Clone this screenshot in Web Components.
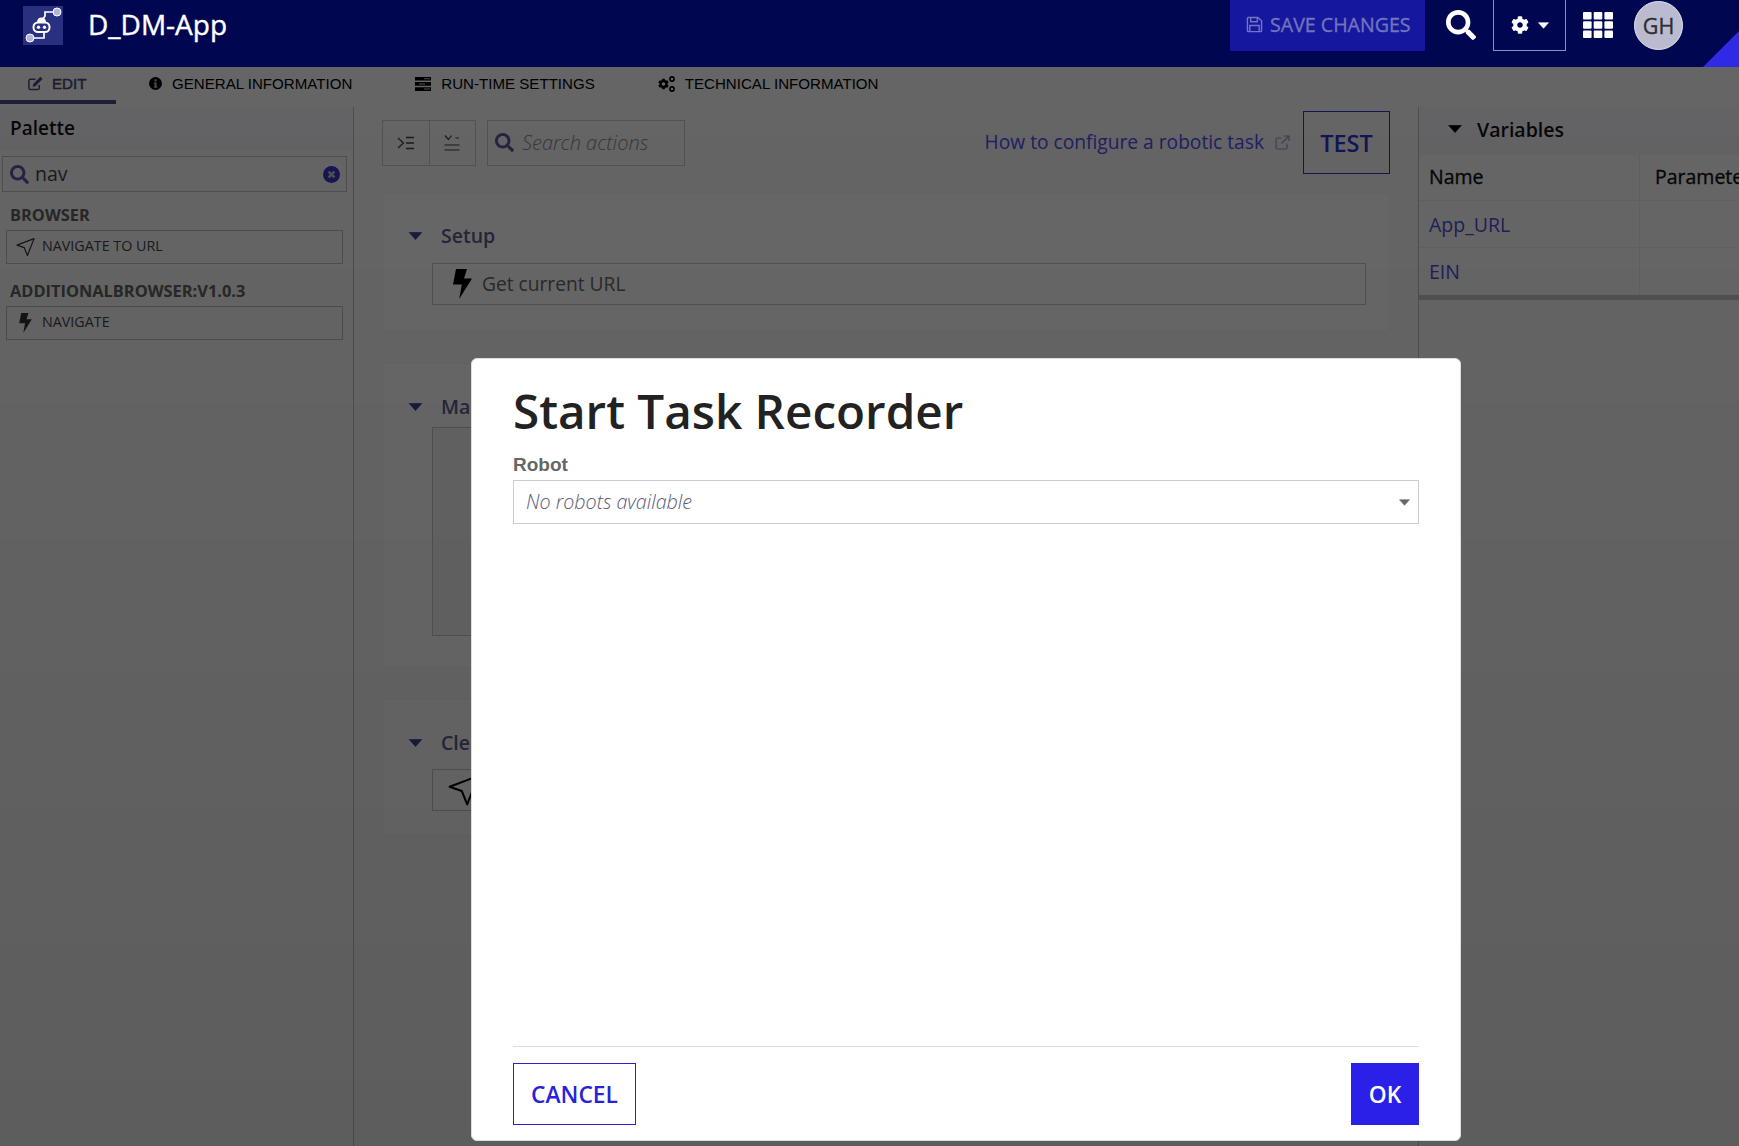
<!DOCTYPE html>
<html>
<head>
<meta charset="utf-8">
<title>D_DM-App</title>
<style>
  html, body { margin: 0; height: 100%; overflow: hidden; }
  body { background: #f5f5f6; font-family: "Open Sans", "Liberation Sans", sans-serif; }
  .page { display: block; width: 1739px; height: 1146px; overflow: hidden; }
  .workspace { display: grid; grid-template-columns: 354px 1065px 320px; height: 1042px; margin-top: 3px; }
</style>
</head>
<body>
<div class="page">
  <app-header title-text="D_DM-App"></app-header>
  <tab-bar></tab-bar>
  <div class="workspace">
    <palette-panel></palette-panel>
    <action-editor>
      <action-section label="Setup" top="33" gap="18" inner="42" bottom="26" kind="bolt" text="Get current URL"></action-section>
      <action-section label="Main" top="34" gap="11" inner="209" bottom="31"></action-section>
      <action-section label="Cleanup" top="34" gap="17" inner="42" bottom="24" kind="nav" text="Close browser"></action-section>
    </action-editor>
    <variables-panel></variables-panel>
  </div>
</div>
<task-modal heading="Start Task Recorder"></task-modal>

<script>
const ICONS = {
  search: '<svg viewBox="0 0 512 512"><path fill="currentColor" d="M505 442.7L405.3 343c-4.5-4.5-10.6-7-17-7H372c27.6-35.3 44-79.7 44-128C416 93.1 322.9 0 208 0S0 93.1 0 208s93.1 208 208 208c48.3 0 92.7-16.4 128-44v16.3c0 6.4 2.5 12.5 7 17l99.7 99.7c9.4 9.4 24.6 9.4 33.9 0l28.3-28.3c9.4-9.4 9.4-24.6.1-34zM208 336c-70.7 0-128-57.2-128-128 0-70.7 57.2-128 128-128 70.7 0 128 57.2 128 128 0 70.7-57.2 128-128 128z"/></svg>',
  cog: '<svg viewBox="0 0 512 512"><path fill="currentColor" d="M487.4 315.7l-42.6-24.6c4.3-23.2 4.3-47 0-70.2l42.6-24.6c4.9-2.8 7.1-8.6 5.5-14-11.1-35.6-30-67.8-54.7-94.6-3.8-4.1-10-5.1-14.8-2.3L380.8 110c-17.9-15.4-38.5-27.3-60.8-35.1V25.8c0-5.6-3.9-10.5-9.4-11.7-36.7-8.2-74.3-7.8-109.2 0-5.5 1.2-9.4 6.1-9.4 11.7V75c-22.2 7.9-42.8 19.8-60.8 35.1L88.7 85.5c-4.9-2.8-11-1.9-14.8 2.3-24.7 26.7-43.6 58.9-54.7 94.6-1.7 5.4.6 11.2 5.5 14L67.3 221c-4.3 23.2-4.3 47 0 70.2l-42.6 24.6c-4.9 2.8-7.1 8.6-5.5 14 11.1 35.6 30 67.8 54.7 94.6 3.8 4.1 10 5.1 14.8 2.3l42.6-24.6c17.9 15.4 38.5 27.3 60.8 35.1v49.2c0 5.6 3.9 10.5 9.4 11.7 36.7 8.2 74.3 7.8 109.2 0 5.5-1.2 9.4-6.1 9.4-11.7v-49.2c22.2-7.9 42.8-19.8 60.8-35.1l42.6 24.6c4.9 2.8 11 1.9 14.8-2.3 24.7-26.7 43.6-58.9 54.7-94.6 1.5-5.5-.7-11.3-5.6-14.1zM256 336c-44.1 0-80-35.9-80-80s35.9-80 80-80 80 35.9 80 80-35.9 80-80 80z"/></svg>',
  save: '<svg viewBox="0 0 18 18" fill="none" stroke="currentColor" stroke-width="1.5"><path d="M1.5 2.5a1 1 0 0 1 1-1h10.2l3.8 3.8v10.2a1 1 0 0 1-1 1h-13a1 1 0 0 1-1-1z"/><path d="M5 1.5v4.5h7V1.5M4 16.5V10h10v6.5"/></svg>',
  grid: '<svg viewBox="0 0 30 26" fill="currentColor"><rect x="0" y="0" width="8.6" height="7.4" rx="1"/><rect x="10.7" y="0" width="8.6" height="7.4" rx="1"/><rect x="21.4" y="0" width="8.6" height="7.4" rx="1"/><rect x="0" y="9.3" width="8.6" height="7.4" rx="1"/><rect x="10.7" y="9.3" width="8.6" height="7.4" rx="1"/><rect x="21.4" y="9.3" width="8.6" height="7.4" rx="1"/><rect x="0" y="18.6" width="8.6" height="7.4" rx="1"/><rect x="10.7" y="18.6" width="8.6" height="7.4" rx="1"/><rect x="21.4" y="18.6" width="8.6" height="7.4" rx="1"/></svg>',
  caret: '<svg viewBox="0 0 12 7"><path fill="currentColor" stroke="currentColor" stroke-width=".6" stroke-linejoin="round" d="M.5.4h11L6 6.600z"/></svg>',
  edit: '<svg viewBox="0 0 16 15"><path fill="none" stroke="currentColor" stroke-width="1.6" d="M12 9v3.2a1.6 1.6 0 0 1-1.6 1.6H2.6A1.6 1.6 0 0 1 1 12.2V4.6A1.6 1.6 0 0 1 2.6 3H8"/><path fill="currentColor" d="M13.2.4l2.3 2.3-7.6 7.6-3 .7.7-3z"/></svg>',
  info: '<svg viewBox="0 0 14 14"><circle cx="7" cy="7" r="7" fill="currentColor"/><rect x="5.9" y="2.6" width="2.3" height="2.2" fill="#b8b8b8"/><path fill="#b8b8b8" d="M5.2 5.9h3v4.3h.8v1.4H5.2v-1.4h.8V7.3h-.8z"/></svg>',
  server: '<svg viewBox="0 0 16 14" fill="currentColor"><path d="M0 0h16v3.6H0zM0 5.1h16v3.7H0zM0 10.3h16V14H0z"/><path fill="#b8b8b8" d="M9 1.2h6v1.1H9zM4 6.4h6v1.1H4zM9 11.5h6v1.1H9z"/></svg>',
  cogs: '<svg viewBox="0 0 17 16" fill="currentColor"><g transform="translate(0 2.5) scale(.0215)"><path d="M487.4 315.7l-42.6-24.6c4.3-23.2 4.3-47 0-70.2l42.6-24.6c4.9-2.8 7.1-8.6 5.5-14-11.1-35.6-30-67.8-54.7-94.6-3.8-4.1-10-5.1-14.8-2.3L380.8 110c-17.9-15.4-38.5-27.3-60.8-35.1V25.8c0-5.6-3.9-10.5-9.4-11.7-36.7-8.2-74.3-7.8-109.2 0-5.5 1.2-9.4 6.1-9.4 11.7V75c-22.2 7.9-42.8 19.8-60.8 35.1L88.7 85.5c-4.9-2.8-11-1.9-14.8 2.3-24.7 26.7-43.6 58.9-54.7 94.6-1.7 5.4.6 11.2 5.5 14L67.3 221c-4.3 23.2-4.3 47 0 70.2l-42.6 24.6c-4.9 2.8-7.1 8.6-5.5 14 11.1 35.6 30 67.8 54.7 94.6 3.8 4.1 10 5.1 14.8 2.3l42.6-24.6c17.9 15.4 38.5 27.3 60.8 35.1v49.2c0 5.6 3.9 10.5 9.4 11.7 36.7 8.2 74.3 7.8 109.2 0 5.5-1.2 9.4-6.1 9.4-11.7v-49.2c22.2-7.9 42.8-19.8 60.8-35.1l42.6 24.6c4.9 2.8 11 1.9 14.8-2.3 24.7-26.7 43.6-58.9 54.7-94.6 1.5-5.5-.7-11.3-5.6-14.1zM256 336c-44.1 0-80-35.9-80-80s35.9-80 80-80 80 35.9 80 80-35.9 80-80 80z"/></g><circle cx="14" cy="3" r="2.1" fill="none" stroke="currentColor" stroke-width="1.6"/><circle cx="14" cy="13" r="2.1" fill="none" stroke="currentColor" stroke-width="1.6"/></svg>',
  clear: '<svg viewBox="0 0 17 17"><circle cx="8.5" cy="8.5" r="8.5" fill="currentColor"/><path d="M5.6 5.6l5.8 5.8M11.4 5.6l-5.8 5.8" stroke="#c4c4c6" stroke-width="2.4"/></svg>',
  nav: '<svg viewBox="0 0 20 20"><path fill="none" stroke="currentColor" stroke-width="1.25" stroke-linejoin="round" d="M19 1.200L1 8l7.600 2.600L12 19z"/></svg>',
  bolt: '<svg viewBox="0 0 19 30"><path fill="currentColor" d="M3 0h11l-3 9.5h8L6.2 30l2.6-14.5H0z"/></svg>',
  outdent: '<svg viewBox="0 0 18 16" fill="none" stroke="currentColor" stroke-width="1.3"><path d="M1 3l5.4 5L1 13M9 2.5h8M9 8h8M9 13.5h8"/></svg>',
  check: '<svg viewBox="0 0 16 18" fill="none" stroke="currentColor" stroke-width="1.2"><path d="M1 1.500l3.400 4 3.200-4M11.500 4h3.500M.5 11h15M.5 16h15"/></svg>',
  external: '<svg viewBox="0 0 15 15" fill="none" stroke="currentColor" stroke-width="1.2"><path d="M12 8.5v4a1.5 1.5 0 0 1-1.500 1.500h-8A1.500 1.500 0 0 1 1 12.500v-8A1.500 1.500 0 0 1 2.500 3h4M9 1h5v5M14 1L6.500 8.500"/></svg>'
};

// small svg wrapper, size comes from the w and h attributes
class UiIcon extends HTMLElement {
  connectedCallback() {
    const w = this.getAttribute('w') || 16;
    const h = this.getAttribute('h') || w;
    this.attachShadow({ mode: 'open' }).innerHTML = `
      <style>
        :host { display: inline-block; width: ${w}px; height: ${h}px; flex: none; line-height: 0; }
        svg { display: block; width: 100%; height: 100%; }
      </style>${ICONS[this.getAttribute('name')] || ''}`;
  }
}

class AppHeader extends HTMLElement {
  connectedCallback() {
    this.attachShadow({ mode: 'open' }).innerHTML = `
      <style>
        :host { display: flex; position: relative; height: 67px; align-items: flex-start; background: #000650; color: #fff; overflow: hidden; }
        .logo { margin: 6px 0 0 23px; width: 40px; height: 39px; background: #2a3080; flex: none; }
        .logo svg { display: block; width: 40px; height: 39px; }
        .name { margin: 4px 0 0 25px; font-size: 28px; font-weight: 500; line-height: 40px; -webkit-text-stroke: .4px #fff; }
        .spacer { flex: 1; }
        .save { display: flex; align-items: center; gap: 7px; width: 195px; height: 49px; padding-bottom: 2px; background: #15189f; color: #7274bc; font-size: 19.600px; -webkit-text-stroke: .35px #7274bc; }
        .save ui-icon { margin-left: 16px; }
        .search { margin: 10px 0 0 21px; }
        .gear { display: flex; align-items: center; box-sizing: border-box; width: 73px; height: 51px; margin-left: 17px; padding-left: 17px; border: 1px solid #8c8ec4; border-top: 0; }
        .gear ui-icon:last-child { margin-left: 9px; }
        .grid { margin: 12px 0 0 17px; }
        .avatar { display: flex; align-items: center; justify-content: center; box-sizing: border-box; width: 49px; height: 49px; margin: 1px 56px 0 21px; border-radius: 50%; border: 1px solid #e4e4ee; background: #bbbbd0; color: #2e2e2e; font-size: 21.500px; -webkit-text-stroke: .35px #2e2e2e; }
        .corner { position: absolute; right: 0; bottom: 0; width: 36px; height: 36px; background: #2f2be4; clip-path: polygon(100% 0, 100% 100%, 0 100%); }
      </style>
      <div class="logo">
        <svg viewBox="0 0 40 39">
          <path d="M30 6H22V10L20 13M11 32H21V27" fill="none" stroke="#fff" stroke-width="1.700"/>
          <circle cx="34" cy="6" r="4" fill="#b4b4d8" stroke="#fff" stroke-width="1"/>
          <circle cx="7" cy="32" r="4" fill="#b4b4d8" stroke="#fff" stroke-width="1"/>
          <path d="M14 16a4.500 4.500 0 0 1 9 0" fill="#fff"/>
          <rect x="10.500" y="16.500" width="16" height="9.500" rx="4.500" fill="#2a3080" stroke="#fff" stroke-width="2"/>
          <circle cx="15.500" cy="21.200" r="1.700" fill="#fff"/><circle cx="21.500" cy="21.200" r="1.700" fill="#fff"/>
        </svg>
      </div>
      <div class="name">${this.getAttribute('title-text')}</div>
      <div class="spacer"></div>
      <div class="save"><ui-icon name="save" w="17"></ui-icon><span>SAVE CHANGES</span></div>
      <ui-icon class="search" name="search" w="30"></ui-icon>
      <div class="gear"><ui-icon name="cog" w="18"></ui-icon><ui-icon name="caret" w="11" h="7"></ui-icon></div>
      <ui-icon class="grid" name="grid" w="30" h="26"></ui-icon>
      <div class="avatar">GH</div>
      <div class="corner"></div>`;
  }
}

class TabBar extends HTMLElement {
  connectedCallback() {
    this.attachShadow({ mode: 'open' }).innerHTML = `
      <style>
        :host { display: flex; height: 37px; font: 15.100px "Liberation Sans", Arial, sans-serif; color: #000; }
        .tab { display: flex; align-items: center; height: 33px; white-space: nowrap; }
        .tab ui-icon { margin-right: 10px; }
        .edit { width: 88px; padding-left: 28px; color: #46467e; border-bottom: 4px solid #4a4a8c; -webkit-text-stroke: .5px #46467e; }
        .edit ui-icon { margin-right: 9px; }
        .gen { margin-left: 33px; }
        .run { margin-left: 63px; }
        .tech { margin-left: 63px; }
      </style>
      <div class="tab edit"><ui-icon name="edit" w="15"></ui-icon>EDIT</div>
      <div class="tab gen"><ui-icon name="info" w="13"></ui-icon>GENERAL INFORMATION</div>
      <div class="tab run"><ui-icon name="server" w="16" h="14"></ui-icon>RUN-TIME SETTINGS</div>
      <div class="tab tech"><ui-icon name="cogs" w="17" h="16"></ui-icon>TECHNICAL INFORMATION</div>`;
  }
}

class PaletteGroup extends HTMLElement {
  connectedCallback() {
    this.attachShadow({ mode: 'open' }).innerHTML = `
      <style>
        :host { display: block; margin-top: ${this.getAttribute('gap')}px; }
        h3 { margin: 0 0 4px 10px; font-size: 16.400px; font-weight: 700; line-height: 22px; color: #606060; }
      </style>
      <h3>${this.getAttribute('label')}</h3>
      <slot></slot>`;
  }
}

class PaletteItem extends HTMLElement {
  connectedCallback() {
    const bolt = this.getAttribute('icon') === 'bolt';
    this.attachShadow({ mode: 'open' }).innerHTML = `
      <style>
        :host { display: flex; align-items: center; box-sizing: border-box; width: 337px; height: 34px; margin-left: 6px; padding-left: 9px; gap: 7px; border: 1px solid #bcbcbc; font-size: 14.300px; color: #444; }
        .ico { width: 19px; display: flex; justify-content: center; color: #333; }
        span { padding-bottom: 4px; }
      </style>
      <div class="ico"><ui-icon name="${this.getAttribute('icon')}" w="${bolt ? 13 : 19}" h="20"></ui-icon></div>
      <span><slot></slot></span>`;
  }
}

class PalettePanel extends HTMLElement {
  connectedCallback() {
    this.attachShadow({ mode: 'open' }).innerHTML = `
      <style>
        :host { display: block; border-right: 1px solid #bdbdbd; box-sizing: border-box; color: #222; }
        .head { height: 43px; padding-left: 10px; font-size: 19px; font-weight: 600; line-height: 43px; background: #f0f0f8; color: #111; }
        .search { display: flex; align-items: center; box-sizing: border-box; width: 345px; height: 36px; margin: 6px 0 0 2px; padding: 0 6px 0 7px; border: 1px solid #c0c0c0; }
        .search ui-icon:first-child { color: #5a5a9e; }
        .search span { flex: 1; margin-left: 6px; padding-bottom: 1px; font-size: 19.500px; color: #444; }
        .search ui-icon:last-child { color: #3a38c8; }
      </style>
      <div class="head">Palette</div>
      <div class="search"><ui-icon name="search" w="19"></ui-icon><span>nav</span><ui-icon name="clear" w="17"></ui-icon></div>
      <palette-group gap="12" label="BROWSER"><palette-item icon="nav">NAVIGATE TO URL</palette-item></palette-group>
      <palette-group gap="16" label="ADDITIONALBROWSER:V1.0.3"><palette-item icon="bolt">NAVIGATE</palette-item></palette-group>`;
  }
}

class ActionSection extends HTMLElement {
  connectedCallback() {
    const top = this.getAttribute('top');
    const gap = this.getAttribute('gap');
    const inner = this.getAttribute('inner');
    const bottom = this.getAttribute('bottom');
    const kind = this.getAttribute('kind');
    const text = this.getAttribute('text');
    const row = kind
      ? `<ui-icon name="${kind}" w="${kind === 'bolt' ? 19 : 32}" h="${kind === 'bolt' ? 30 : 32}"></ui-icon><span>${text}</span>`
      : '';
    this.attachShadow({ mode: 'open' }).innerHTML = `
      <style>
        :host { display: block; box-sizing: border-box; padding: ${top}px 23px ${bottom}px 25px; background: #fafafa; border: 1px solid #f0f0f0; margin-bottom: 31px; }
        .title { display: flex; align-items: center; height: 18px; font-size: 19.500px; font-weight: 600; color: #5c5c8e; }
        .title span { padding-bottom: 2px; }
        .title ui-icon { color: #3e3e90; margin-right: 18px; }
        .row { display: flex; align-items: center; box-sizing: border-box; height: ${inner}px; margin: ${gap}px 0 0 24px; padding-left: ${kind === 'nav' ? 15 : 20}px; gap: 10px; border: 1px solid #c4c4c4; font-size: 19.200px; color: #666; background: ${kind ? 'transparent' : '#f0f0f0'}; }
        .row ui-icon { color: #000; }
        .row span { padding-bottom: 2px; }
      </style>
      <div class="title"><ui-icon name="caret" w="15" h="8"></ui-icon><span>${this.getAttribute('label')}</span></div>
      <div class="row">${row}</div>`;
  }
}

class ActionEditor extends HTMLElement {
  connectedCallback() {
    this.attachShadow({ mode: 'open' }).innerHTML = `
      <style>
        :host { display: block; box-sizing: border-box; padding: 4px 28px 0 28px; border-right: 1px solid #bdbdbd; }
        .bar { display: flex; align-items: center; height: 63px; margin-bottom: 19px; }
        .btns { display: flex; width: 94px; height: 46px; box-sizing: border-box; border: 1px solid #c8c8c8; }
        .btns div { flex: 1; display: flex; align-items: center; justify-content: center; color: #444; }
        .btns div + div { border-left: 1px solid #c8c8c8; }
        .find { display: flex; align-items: center; box-sizing: border-box; width: 198px; height: 46px; margin-left: 11px; padding-left: 7px; gap: 8px; border: 1px solid #c8c8c8; font-size: 20px; font-style: italic; font-weight: 300; color: #888; }
        .find ui-icon { color: #5a5a9e; }
        a { margin-left: auto; padding-bottom: 2px; color: #4c4cf0; font-size: 19.200px; text-decoration: none; white-space: nowrap; }
        .ext { margin-left: 11px; color: #9a9ad0; }
        .test { display: flex; align-items: center; justify-content: center; box-sizing: border-box; width: 87px; height: 63px; margin-left: 13px; border: 1.500px solid #3030d0; color: #3030d0; font-size: 23.500px; font-weight: 600; }
      </style>
      <div class="bar">
        <div class="btns"><div><ui-icon name="outdent" w="18" h="16"></ui-icon></div><div><ui-icon name="check" w="16" h="18"></ui-icon></div></div>
        <div class="find"><ui-icon name="search" w="19"></ui-icon><span>Search actions</span></div>
        <a>How to configure a robotic task</a><ui-icon class="ext" name="external" w="15"></ui-icon>
        <div class="test">TEST</div>
      </div>
      <slot></slot>`;
  }
}

class VariablesPanel extends HTMLElement {
  connectedCallback() {
    this.attachShadow({ mode: 'open' }).innerHTML = `
      <style>
        :host { display: block; overflow: hidden; font-size: 19.500px; color: #111; }
        .head { display: flex; align-items: center; box-sizing: border-box; height: 48px; padding: 0 0 4px 29px; background: #f0f0f8; font-size: 19.500px; font-weight: 600; }
        .head ui-icon { margin-right: 15px; color: #000; }
        .grid { display: grid; grid-template-columns: 221px 200px; border-bottom: 5px solid #c4c4c4; background: #f8f8f8; }
        .grid div { box-sizing: border-box; height: 47px; padding-left: 10px; line-height: 47px; white-space: nowrap; border-bottom: 1px solid #e8e8e8; }
        .grid div:nth-child(odd) { border-right: 1px solid #e8e8e8; }
        .grid div:nth-child(even) { padding-left: 15px; }
        .grid .th { height: 46px; line-height: 44px; -webkit-text-stroke: .35px #111; }
        .var { color: #4c4cd8; }
      </style>
      <div class="head"><ui-icon name="caret" w="14" h="8"></ui-icon>Variables</div>
      <div class="grid">
        <div class="th">Name</div><div class="th">Parameter</div>
        <div class="var">App_URL</div><div></div>
        <div class="var" style="border-bottom:0">EIN</div><div style="border-bottom:0"></div>
      </div>`;
  }
}

class TaskModal extends HTMLElement {
  connectedCallback() {
    this.attachShadow({ mode: 'open' }).innerHTML = `
      <style>
        :host { display: block; position: fixed; left: 0; right: 0; top: 67px; bottom: 0; background: linear-gradient(rgba(0,0,0,.59), rgba(0,0,0,.62)); }
        .dialog { position: absolute; left: 471px; top: 291px; width: 990px; height: 783px; box-sizing: border-box; display: flex; flex-direction: column; padding: 0 41px 15px 41px; background: #fff; border: 1px solid #ddd; border-radius: 6px; }
        h1 { margin: 22px 0 0; font-size: 47.600px; font-weight: 600; line-height: 60px; color: #222; }
        label { margin-top: 12px; font: bold 19px/24px "Liberation Sans", Arial, sans-serif; color: #666; }
        .select { display: flex; align-items: center; justify-content: space-between; box-sizing: border-box; height: 44px; margin-top: 3px; padding: 0 8px 0 12px; border: 1px solid #ccc; font-size: 19.700px; font-style: italic; font-weight: 300; color: #5a5a78; }
        .select span { padding-bottom: 1px; }
        .select ui-icon { color: #666; }
        .fill { flex: 1; }
        .foot { display: flex; justify-content: space-between; padding-top: 16px; border-top: 1px solid #ddd; }
        button { height: 62px; box-sizing: border-box; padding: 0; border: 1px solid #2a22c8; font: 600 22.800px "Open Sans", sans-serif; cursor: pointer; }
        .cancel { width: 123px; background: #fff; color: #2a22d8; }
        .ok { width: 68px; background: #2a20e8; border-color: #2a20e8; color: #fff; }
      </style>
      <div class="dialog">
        <h1>${this.getAttribute('heading')}</h1>
        <label>Robot</label>
        <div class="select"><span>No robots available</span><ui-icon name="caret" w="11" h="7"></ui-icon></div>
        <div class="fill"></div>
        <div class="foot"><button class="cancel">CANCEL</button><button class="ok">OK</button></div>
      </div>`;
  }
}

customElements.define('ui-icon', UiIcon);
customElements.define('app-header', AppHeader);
customElements.define('tab-bar', TabBar);
customElements.define('palette-group', PaletteGroup);
customElements.define('palette-item', PaletteItem);
customElements.define('palette-panel', PalettePanel);
customElements.define('action-section', ActionSection);
customElements.define('action-editor', ActionEditor);
customElements.define('variables-panel', VariablesPanel);
customElements.define('task-modal', TaskModal);
</script>
</body>
</html>
